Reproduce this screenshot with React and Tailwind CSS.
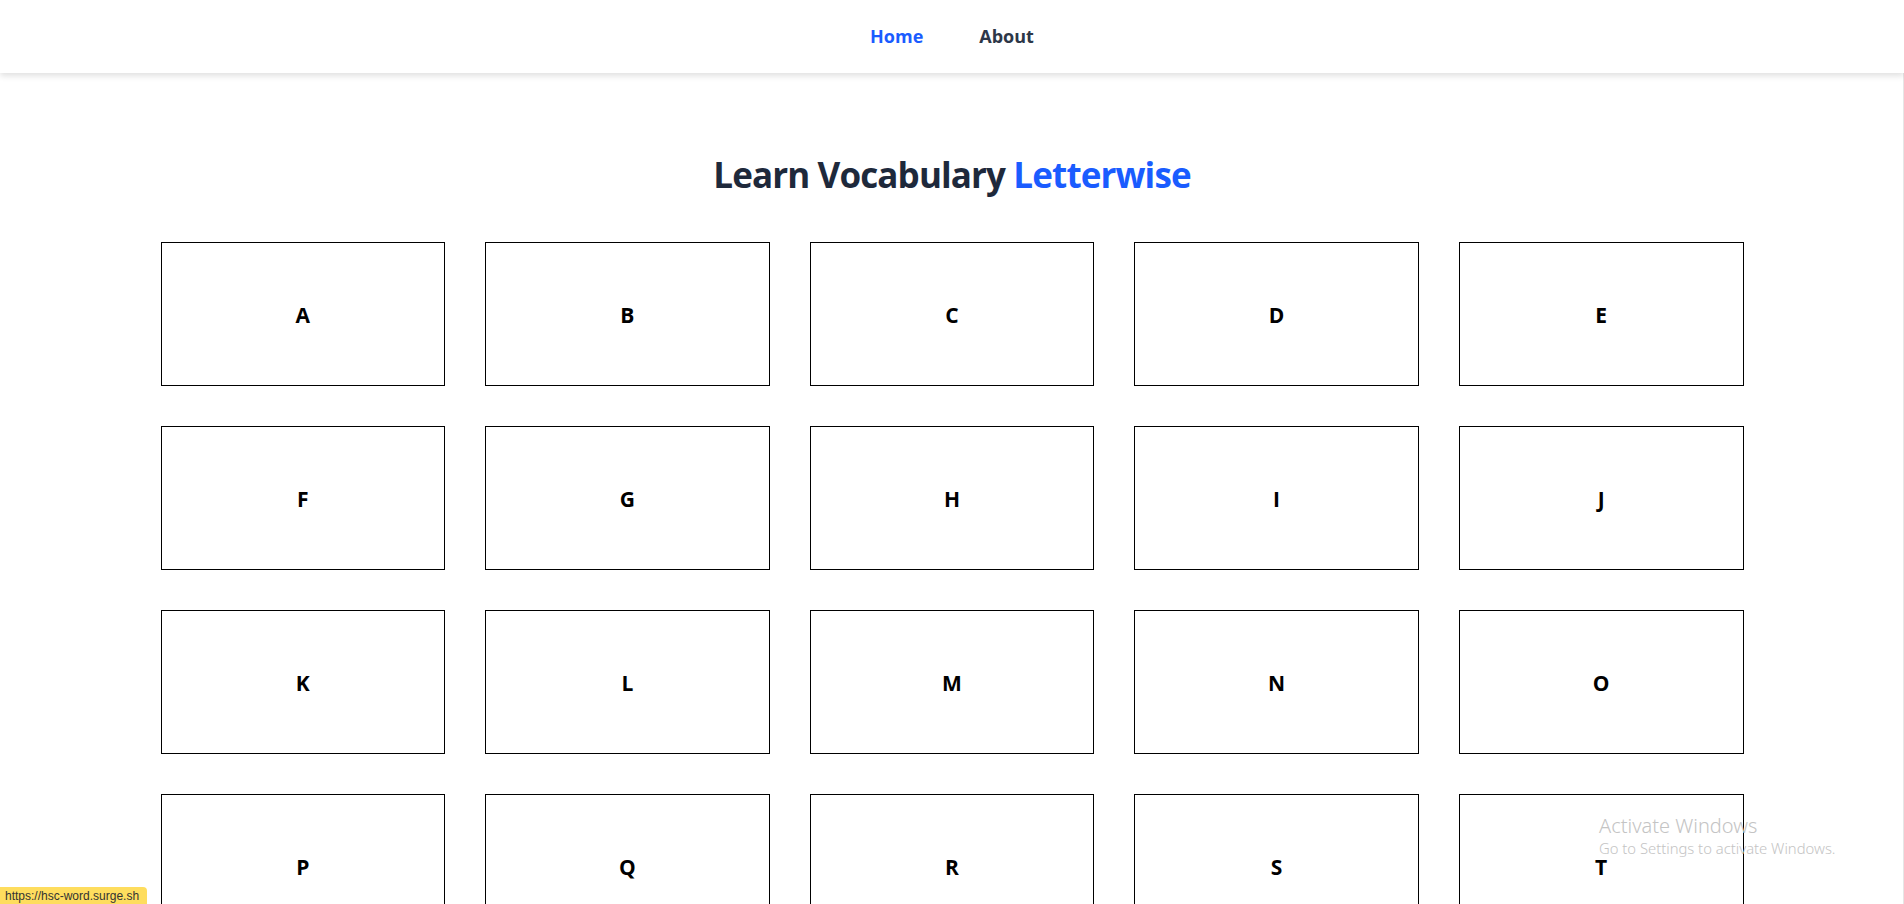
import React from "react";

const letters = "ABCDEFGHIJKLMNOPQRSTUVWXYZ".split("");

export default function App() {
  return (
    <div
      className="relative h-[904px] w-full overflow-hidden bg-white"
      style={{ fontFamily: '"Open Sans", "Noto Sans", sans-serif' }}
    >
      <header className="relative z-10 flex h-[73px] items-center justify-center gap-[56px] bg-white pb-[2px] shadow-[0_3px_6px_rgba(0,0,0,0.12)]">
        <a className="text-lg font-bold leading-7 text-[#1a5cff]">Home</a>
        <a className="text-lg font-bold leading-7 text-[#2d3748]">About</a>
      </header>

      <main className="pt-[82px]">
        <h1 className="text-center text-[35px] font-bold leading-10 tracking-tight text-[#1e293b]">
          Learn Vocabulary <span className="text-[#1a5cff]">Letterwise</span>
        </h1>
        <div className="mx-auto mt-[47px] grid w-[1583px] grid-cols-5 gap-10">
          {letters.map((l) => (
            <div
              key={l}
              className="flex h-36 items-center justify-center border border-black pt-[4px] text-[21px] font-bold text-black"
            >
              {l}
            </div>
          ))}
        </div>
      </main>

      <div className="absolute right-0 top-0 h-full w-px bg-[#e6e6e6]" />

      <div
        className="pointer-events-none absolute left-[1599px] top-[814px] text-[#c4c4c4]"
        style={{ fontFamily: '"Noto Sans", "Open Sans", sans-serif' }}
      >
        <div className="text-[20px] font-light leading-6">Activate Windows</div>
        <div className="text-[14.8px] font-light leading-5">Go to Settings to activate Windows.</div>
      </div>

      <div
        className="absolute bottom-0 left-0 flex h-[17px] items-center rounded-tr-sm bg-[#fedd5e] pl-[5px] pr-[8px] text-[12px] text-[#333]"
        style={{ fontFamily: '"Liberation Sans", Arial, sans-serif' }}
      >
        https://hsc-word.surge.sh
      </div>
    </div>
  );
}
